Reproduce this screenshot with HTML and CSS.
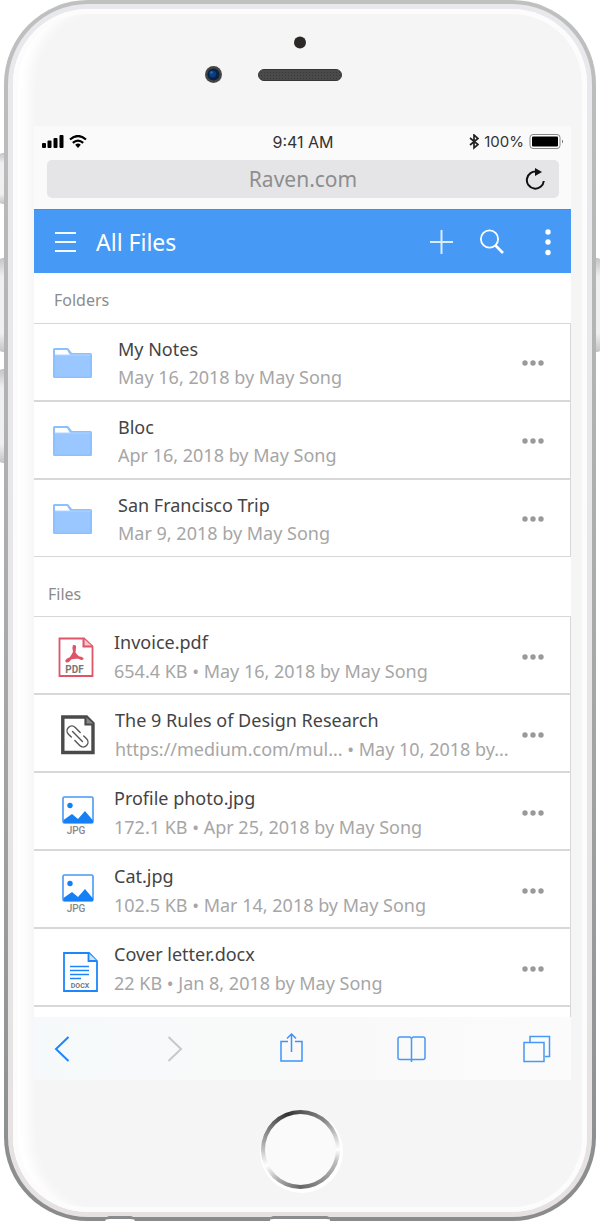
FILE: index.html
```html
<!DOCTYPE html>
<html lang="en">
<head>
<meta charset="utf-8">
<meta name="viewport" content="width=device-width, initial-scale=1">
<title>Raven – All Files</title>
<link rel="stylesheet" href="styles.css">
</head>
<body>
<svg class="defs" aria-hidden="true">
  <defs>
    <symbol id="folder" viewBox="0 0 40 32">
      <path d="M0 2.500Q0 1 1.500 1H15l4 5H37.500Q39 6 39 7.500V29.500Q39 31 37.500 31H1.500Q0 31 0 29.500Z" fill="#8cc0ff"/>
      <path d="M2 3H14l3 5H2Z" fill="#fff"/>
      <path d="M2 8.500H37V29.500H2Z" fill="#9ac7ff"/>
      <path d="M2 8H37.500" stroke="#b5d7ff" stroke-width="1"/>
    </symbol>
    <symbol id="more" viewBox="0 0 24 8">
      <circle cx="5" cy="4" r="2.700"/><circle cx="13" cy="4" r="2.700"/><circle cx="21" cy="4" r="2.700"/>
    </symbol>
    <symbol id="jpg" viewBox="0 0 32 40">
      <rect x="1" y="1" width="30" height="26" rx="1.500" fill="#fff" stroke="#4799f6" stroke-width="1.600"/>
      <circle cx="8" cy="9.500" r="2.700" fill="#1580f5"/>
      <path d="M1.500 26V24L10 18l6 5 7-8 8 9.500V27H1.500Z" fill="#1580f5"/>
      <text x="14" y="38" text-anchor="middle" class="tag">JPG</text>
    </symbol>
  </defs>
</svg>

<div class="phone">
  <span class="key key-mute"></span>
  <span class="key key-up"></span>
  <span class="key key-down"></span>
  <span class="key key-power"></span>
  <div class="frame">
    <div class="face">
      <div class="sensors">
        <svg width="200" height="60" viewBox="200 30 200 60" aria-hidden="true">
          <defs>
            <pattern id="mesh" width="3" height="3" patternUnits="userSpaceOnUse"><rect width="3" height="3" fill="#4a4a4a"/><rect width="1" height="1" fill="#383838"/></pattern>
          </defs>
          <circle cx="300" cy="42.500" r="6" fill="#2d2828"/>
          <circle cx="213.500" cy="74.500" r="8.500" fill="#474444"/>
          <circle cx="213.500" cy="74.500" r="6" fill="#0a2344"/>
          <circle cx="212.500" cy="74" r="3.500" fill="#0c3d80"/>
          <circle cx="211.500" cy="72.500" r="1.300" fill="#2a66b4"/>
          <rect x="258.500" y="69.500" width="83" height="11" rx="5.500" fill="url(#mesh)" stroke="#383838"/>
        </svg>
      </div>

      <div class="screen">
        <div class="status">
          <div class="status-side">
            <svg width="22" height="14" viewBox="0 0 22 14" aria-hidden="true"><rect x="0" y="8" width="4" height="5" rx="1"/><rect x="5.500" y="5.500" width="4" height="7.500" rx="1"/><rect x="11.500" y="3" width="4" height="10" rx="1"/><rect x="17.500" y="0" width="4" height="13" rx="1"/></svg>
            <svg width="18" height="14" viewBox="0 0 18 14" fill="none" stroke="#000" stroke-width="2.200" aria-hidden="true"><path d="M1 4.500Q9-2.500 17 4.500"/><path d="M3.800 7.800Q9 3.300 14.200 7.800"/><path d="M6.200 9.800Q9 7.400 11.800 9.800L9 13Z" fill="#000" stroke="none"/></svg>
          </div>
          <span>9:41 AM</span>
          <div class="status-side status-right">
            <svg width="10" height="16" viewBox="0 0 10 16" fill="none" stroke="#222" stroke-width="1.700" aria-hidden="true"><path d="M1 4 9 10.500 5 14V1L9 4.500 1 11"/></svg>
            <span class="charge">100%</span>
            <svg width="35" height="16" viewBox="0 0 35 16" aria-hidden="true"><rect x="1" y=".5" width="30" height="14" rx="3" fill="#fff" stroke="#888"/><rect x="3" y="2.500" width="26" height="10" rx="1"/><path d="M33 5.500Q35 7.500 33 9.500Z" fill="#666"/></svg>
          </div>
        </div>

        <form class="address">
          <input class="url" type="text" value="Raven.com" aria-label="Address">
          <button class="icon-button reload" type="button" aria-label="Reload">
            <svg width="22" height="22" viewBox="0 0 22 22" fill="none" stroke="#111" stroke-width="2"><path d="M13 3.800A8.500 8.500 0 1 0 19.800 13"/><path d="M11 0 18 4 11 8Z" fill="#111" stroke="none"/></svg>
          </button>
        </form>

        <header class="appbar">
          <button class="icon-button" type="button" aria-label="Menu">
            <svg width="22" height="22" viewBox="0 0 22 22" stroke="#f4f9ff" stroke-width="1.800"><path d="M1 2H22M1 11H22M1 20H22"/></svg>
          </button>
          <h1 class="title">All Files</h1>
          <button class="icon-button" type="button" aria-label="Add">
            <svg width="24" height="24" viewBox="0 0 24 24" stroke="#dcecff" stroke-width="2"><path d="M0 12H23M11.500 0V24"/></svg>
          </button>
          <button class="icon-button search" type="button" aria-label="Search">
            <svg width="25" height="26" viewBox="0 0 25 26" fill="none" stroke="#fff" stroke-width="1.800"><circle cx="9.500" cy="10" r="8.600"/><path d="M15.500 16.500 23 24" stroke-width="2.600"/></svg>
          </button>
          <button class="icon-button" type="button" aria-label="More options">
            <svg width="6" height="28" viewBox="0 0 6 28" fill="#fff"><circle cx="3" cy="4" r="2.700"/><circle cx="3" cy="14" r="2.700"/><circle cx="3" cy="24.500" r="2.700"/></svg>
          </button>
        </header>

        <main>
          <h2 class="section">Folders</h2>
          <ul class="list folders">
            <li class="row">
              <svg class="thumb" width="40" height="32" aria-hidden="true"><use href="#folder"/></svg>
              <div class="info"><p class="name">My Notes</p><p class="meta">May 16, 2018 by May Song</p></div>
              <button class="icon-button" type="button" aria-label="More for My Notes"><svg class="dots" width="24" height="8"><use href="#more"/></svg></button>
            </li>
            <li class="row">
              <svg class="thumb" width="40" height="32" aria-hidden="true"><use href="#folder"/></svg>
              <div class="info"><p class="name">Bloc</p><p class="meta">Apr 16, 2018 by May Song</p></div>
              <button class="icon-button" type="button" aria-label="More for Bloc"><svg class="dots" width="24" height="8"><use href="#more"/></svg></button>
            </li>
            <li class="row">
              <svg class="thumb" width="40" height="32" aria-hidden="true"><use href="#folder"/></svg>
              <div class="info"><p class="name">San Francisco Trip</p><p class="meta">Mar 9, 2018 by May Song</p></div>
              <button class="icon-button" type="button" aria-label="More for San Francisco Trip"><svg class="dots" width="24" height="8"><use href="#more"/></svg></button>
            </li>
          </ul>

          <h2 class="section section-files">Files</h2>
          <ul class="list files">
            <li class="row">
              <svg class="thumb" width="36" height="40" viewBox="0 0 36 40" aria-hidden="true">
                <path d="M1.500 1.500H26L34.500 9.500V39H1.500Z" fill="#fff" stroke="#dd5567" stroke-width="1.800"/><path d="M25.500 1.500V9.500H34.500" fill="#f5c6cc" stroke="#dd5567" stroke-width="2"/>
                <path d="M14.800 8.500Q14.200 8 16.300 8 18.500 8 18 10.500L17.500 15.500Q19 18 21.500 19.500 25.800 20 25.500 22 24.500 24.300 20.500 21.800 16.500 21.300 13.500 22.300 11 26 8.500 25.500 6.300 24.500 8 22.500 9 21 11.800 20.300 14 17.500 15 14.800 13.900 10.500 14.800 8.500Z" fill="#dd5567"/>
                <text x="16.500" y="36" text-anchor="middle" class="tag tag-bold">PDF</text>
              </svg>
              <div class="info"><p class="name">Invoice.pdf</p><p class="meta">654.4 KB • May 16, 2018 by May Song</p></div>
              <button class="icon-button" type="button" aria-label="More for Invoice.pdf"><svg class="dots" width="24" height="8"><use href="#more"/></svg></button>
            </li>
            <li class="row">
              <svg class="thumb thumb-link" width="34" height="40" viewBox="0 0 34 40" aria-hidden="true">
                <path d="M1.800 2H25.500L32 8.500V37.500H1.800Z" fill="#fff" stroke="#4a4a4a" stroke-width="3.400"/><path d="M24.500 1.500V9.500H33" fill="#888" stroke="#4a4a4a" stroke-width="2.200"/>
                <g fill="none" stroke="#555" stroke-width="1.400" stroke-linecap="round" transform="translate(16.500 21.500) rotate(45)"><path d="M-1-4.800H-8A4.800 4.800 0 0 0-8 4.800H-4M1 4.800H8A4.800 4.800 0 0 0 8-4.800H4M-7 0H7"/></g>
              </svg>
              <div class="info"><p class="name">The 9 Rules of Design Research</p><p class="meta">https://medium.com/mul... • May 10, 2018 by...</p></div>
              <button class="icon-button" type="button" aria-label="More for The 9 Rules of Design Research"><svg class="dots" width="24" height="8"><use href="#more"/></svg></button>
            </li>
            <li class="row">
              <svg class="thumb thumb-jpg" width="32" height="40" aria-hidden="true"><use href="#jpg"/></svg>
              <div class="info"><p class="name">Profile photo.jpg</p><p class="meta">172.1 KB • Apr 25, 2018 by May Song</p></div>
              <button class="icon-button" type="button" aria-label="More for Profile photo.jpg"><svg class="dots" width="24" height="8"><use href="#more"/></svg></button>
            </li>
            <li class="row">
              <svg class="thumb thumb-jpg" width="32" height="40" aria-hidden="true"><use href="#jpg"/></svg>
              <div class="info"><p class="name">Cat.jpg</p><p class="meta">102.5 KB • Mar 14, 2018 by May Song</p></div>
              <button class="icon-button" type="button" aria-label="More for Cat.jpg"><svg class="dots" width="24" height="8"><use href="#more"/></svg></button>
            </li>
            <li class="row">
              <svg class="thumb thumb-docx" width="35" height="40" viewBox="0 0 35 40" aria-hidden="true">
                <path d="M1 1H26L34 9V39H1Z" fill="#fff" stroke="#1d86fa" stroke-width="1.800"/><path d="M25.500 1V9H34" fill="#cde4ff" stroke="#1d86fa" stroke-width="1.800"/>
                <path d="M7 14.500H26M7 18.500H26M7 22.500H26M7 26.500H18" stroke="#1d86fa" stroke-width="1.500"/>
                <text x="17" y="35.500" text-anchor="middle" class="tag tag-small">DOCX</text>
              </svg>
              <div class="info"><p class="name">Cover letter.docx</p><p class="meta">22 KB • Jan 8, 2018 by May Song</p></div>
              <button class="icon-button" type="button" aria-label="More for Cover letter.docx"><svg class="dots" width="24" height="8"><use href="#more"/></svg></button>
            </li>
            <li class="row row-cut"></li>
          </ul>
        </main>

        <nav class="toolbar">
          <button class="icon-button" type="button" aria-label="Back"><svg width="18" height="28" viewBox="0 0 18 28" fill="none" stroke="#1d86fa" stroke-width="2"><path d="M14.500 2 2 14 14.500 26"/></svg></button>
          <button class="icon-button" type="button" aria-label="Forward"><svg width="22" height="28" viewBox="0 0 22 28" fill="none" stroke="#c8c8c8" stroke-width="2"><path d="M4.500 2 17 14 4.500 26"/></svg></button>
          <button class="icon-button" type="button" aria-label="Share"><svg width="26" height="32" viewBox="0 0 26 32" fill="none" stroke="#3c94fa" stroke-width="1.500"><path d="M10 8.500H3V28H24V8.500H17"/><path d="M13.500 19V1M9 5.500 13.500 1 18 5.500"/></svg></button>
          <button class="icon-button" type="button" aria-label="Bookmarks"><svg width="30" height="28" viewBox="0 0 30 28" fill="none" stroke="#4799f6" stroke-width="1.500"><path d="M15.500 3.500 14 2H4Q2 2 2 4V22.500Q2 24.500 4 24.500H14.500L15.500 25.500 16.500 24.500H27Q29 24.500 29 22.500V4Q29 2 27 2H17L15.500 3.500V27"/></svg></button>
          <button class="icon-button" type="button" aria-label="Tabs"><svg width="33" height="28" viewBox="0 0 33 28" fill="none" stroke="#4799f6" stroke-width="1.500"><path d="M12 7V1.500H31.500V21.500H27"/><rect x="6" y="7.500" width="20" height="19"/></svg></button>
        </nav>
      </div>

      <div class="chin">
        <button class="home" type="button" aria-label="Home"><span class="home-pad"></span></button>
      </div>
    </div>
  </div>
  <span class="notch notch-jack"></span>
  <span class="notch notch-port"></span>
</div>
</body>
</html>
```

FILE: styles.css
```css
* { box-sizing: border-box; }

body {
  margin: 0;
  background: #fff;
  font-family: "Noto Sans", "Open Sans", sans-serif;
}

h1, h2, p, ul { margin: 0; padding: 0; font-weight: 400; }
ul { list-style: none; }
svg { display: block; }
.defs { position: absolute; width: 0; height: 0; }

/* Device body */
.phone {
  position: relative;
  margin: 0 4px;
  padding: 4px;
  border-radius: 84px;
  background: linear-gradient(#bfc1c0, #a9abab 50%, #8a8b8d);
}
.frame {
  padding: 5px;
  border-radius: 80px;
  background: linear-gradient(#e9e9ed, #e6e2e2);
}
.face {
  border-radius: 75px;
  background: #f5f5f5;
  box-shadow: inset 0 0 0 5px #fcfcfc, inset 22px 0 12px -6px #fff;
}

/* Side keys, tucked behind the body */
.key {
  position: absolute;
  z-index: -1;
  left: -6px;
  width: 12px;
  height: 94px;
  border-radius: 5px;
  background: linear-gradient(#c4c4c4, #f0f0f0 20%, #f0f0f0 80%, #c4c4c4);
}
.key-mute { top: 153px; height: 51px; }
.key-up { top: 258px; }
.key-down { top: 369px; }
.key-power { top: 258px; left: auto; right: -6px; }

/* Jack and port cut-outs on the lower edge */
.notch {
  position: absolute;
  bottom: 0;
  height: 5px;
  border-top: 3px solid #8a8b8d;
  background: #fff;
}
.notch-jack { left: 17%; width: 30px; border-radius: 15px 15px 0 0; }
.notch-port { left: 45%; width: 60px; border-radius: 4px 4px 0 0; }

.sensors {
  display: flex;
  justify-content: center;
  padding: 21px 0 36px;
}

/* Screen */
.screen { margin: 0 16px 0 21px; background: #fff; }

.status {
  display: grid;
  grid-template-columns: 1fr auto 1fr;
  align-items: center;
  height: 34px;
  padding: 0 7px 4px 8px;
  background: #fafafa;
  color: #333;
  font: 16px/32px Inter, Roboto, sans-serif;
}
.charge { font-size: 15px; }
.status-side { display: flex; align-items: center; gap: 5px; }
.status-right { justify-content: flex-end; }

.address {
  display: flex;
  align-items: center;
  padding: 0 12px 11px 13px;
  background: #fafafa;
}
.url {
  flex: 1;
  min-width: 0;
  height: 38px;
  padding: 0 0 0 48px;
  border: 0;
  border-radius: 5px 0 0 5px;
  background: #e5e5e7;
  color: #8e8e8e;
  font: 21px/38px "Noto Sans", sans-serif;
  text-align: center;
}

.icon-button {
  display: flex;
  align-items: center;
  justify-content: center;
  padding: 0;
  border: 0;
  background: none;
}
.address .reload {
  width: 48px;
  height: 38px;
  border-radius: 0 5px 5px 0;
  background: #e5e5e7;
}

.appbar {
  display: flex;
  align-items: center;
  height: 64px;
  padding: 0 20px;
  border-top: 1px solid #458fe6;
  background: #4799f6;
  color: #fff;
}
.title {
  flex: 1;
  padding-left: 20px;
  font-size: 23px;
  line-height: 32px;
}
.search { margin: 0 40px 0 26px; }

/* Lists */
.section {
  padding: 16px 20px 12px;
  color: #8c8c8c;
  font-size: 16px;
  line-height: 22px;
}
.section-files { padding: 26px 14px 11px; }

.row {
  display: flex;
  align-items: center;
  padding: 11px 26px 9px 19px;
  border: solid #d8d8d8;
  border-width: 1px 1px 1px 0;
}
.thumb { flex: none; }
.info { flex: 1; min-width: 0; }
.name, .meta {
  overflow: hidden;
  font-size: 18px;
  line-height: 28px;
  white-space: nowrap;
}
.name { color: #444; }
.meta { color: #a6a6a6; }
.folders .info { padding-left: 25px; }
.files .row { padding: 11px 26px 7px 24px; }
.files .meta { line-height: 30px; }
.files .info { padding-left: 20px; }
.files .thumb-link { margin-left: 3px; }
.files .thumb-jpg { margin: 6px 0 0 4px; }
.files .thumb-docx { margin: 6px 0 0 5px; }
.files .thumb-docx + .info { padding-left: 16px; }
.dots { fill: #999; }
.files .row-cut { padding: 5px 0; border-bottom: 0; }

.tag { fill: #888; font: 500 10px Roboto, sans-serif; }
.tag-bold { fill: #777; font-weight: 700; }
.tag-small { fill: #777; font-size: 7px; font-weight: 700; }

.toolbar {
  display: flex;
  align-items: center;
  justify-content: space-between;
  height: 63px;
  padding: 0 20px;
  background: linear-gradient(90deg, #f6f9fb, #f9f9f9 50%, #fbfbfb);
}

/* Home button */
.chin {
  display: flex;
  justify-content: center;
  padding: 30px 0 23px;
}
.home {
  width: 79px;
  height: 79px;
  padding: 4px;
  border: 0;
  border-radius: 50%;
  background: conic-gradient(#555, #888 40deg, #fff 90deg, #bbb 110deg, #666 180deg, #aaa 215deg, #fff 245deg, #aaa 280deg, #333 340deg, #555);
  box-shadow: 1px 2px 0 2px #fff;
}
.home-pad {
  display: block;
  height: 100%;
  border-radius: 50%;
  background: #fafafa;
}
```
